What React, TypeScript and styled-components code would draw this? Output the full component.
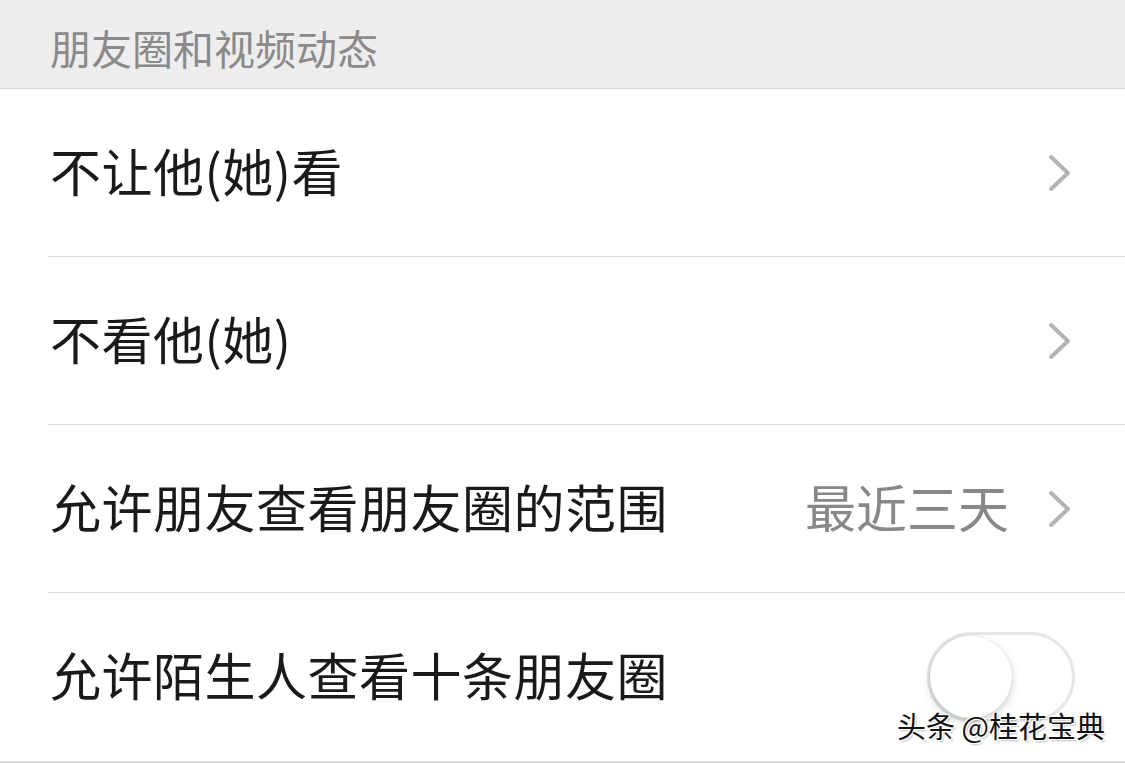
import React from 'react';
import styled, { createGlobalStyle } from 'styled-components';

const GlobalStyle = createGlobalStyle`
  html, body {
    margin: 0;
    padding: 0;
    background: #ededed;
  }
  body {
    font-family: "Noto Sans CJK SC", "Noto Sans", sans-serif;
  }
`;

const Page = styled.div`
  width: 1125px;
  height: 763px;
  overflow: hidden;
  position: relative;
  background: #ededed;
`;

const SectionTitle = styled.div`
  height: 89px;
  box-sizing: border-box;
  padding-left: 50px;
  padding-top: 6px;
  display: flex;
  align-items: center;
  font-size: 41px;
  color: #8a8a8a;
  border-bottom: 1px solid #d6d6d6;
`;

const List = styled.div`
  background: #ffffff;
  border-bottom: 2px solid #dcdcdc;
`;

const Row = styled.div<{ $last?: boolean }>`
  height: 168px;
  box-sizing: border-box;
  margin-left: 48px;
  padding-right: 52px;
  display: flex;
  align-items: center;
  border-bottom: ${(p) => (p.$last ? 'none' : '1px solid #d9d9d9')};
`;

const Label = styled.div`
  flex: 1;
  padding-left: 2px;
  padding-bottom: 6px;
  font-size: 51px;
  color: #1a1a1a;
  letter-spacing: 0.5px;
`;

const Value = styled.span`
  font-size: 51px;
  color: #888888;
  margin-right: 38px;
  padding-bottom: 6px;
`;

const Chevron = styled.svg`
  width: 26px;
  height: 40px;
  flex: none;
`;

const Toggle = styled.div`
  width: 148px;
  height: 90px;
  box-sizing: border-box;
  border-radius: 45px;
  border: 3px solid #e6e6e6;
  background: #fff;
  margin-right: -2px;
  position: relative;
`;

const Knob = styled.div`
  position: absolute;
  left: 0;
  top: 1px;
  width: 82px;
  height: 82px;
  border-radius: 50%;
  background: #fff;
  box-shadow: 0 4px 10px rgba(0, 0, 0, 0.18), 0 0 2px rgba(0, 0, 0, 0.12);
`;

const Watermark = styled.div`
  position: absolute;
  left: 897px;
  top: 704px;
  font-size: 29px;
  font-family: "Noto Sans CJK SC", sans-serif;
  color: #111;
  text-shadow: 1px 1px 0 #fff, -1px -1px 0 #fff, 1px -1px 0 #fff, -1px 1px 0 #fff, 2px 2px 2px rgba(0,0,0,0.25);
`;

const Arrow = () => (
  <Chevron viewBox="0 0 26 40">
    <path d="M4 4 L21 20 L4 36" fill="none" stroke="#b3b3b3" strokeWidth="4" strokeLinecap="round" strokeLinejoin="round" />
  </Chevron>
);

export default function App() {
  return (
    <Page>
      <GlobalStyle />
      <SectionTitle>朋友圈和视频动态</SectionTitle>
      <List>
        <Row>
          <Label>不让他(她)看</Label>
          <Arrow />
        </Row>
        <Row>
          <Label>不看他(她)</Label>
          <Arrow />
        </Row>
        <Row>
          <Label>允许朋友查看朋友圈的范围</Label>
          <Value>最近三天</Value>
          <Arrow />
        </Row>
        <Row $last>
          <Label>允许陌生人查看十条朋友圈</Label>
          <Toggle>
            <Knob />
          </Toggle>
        </Row>
      </List>
      <Watermark>头条 @桂花宝典</Watermark>
    </Page>
  );
}
